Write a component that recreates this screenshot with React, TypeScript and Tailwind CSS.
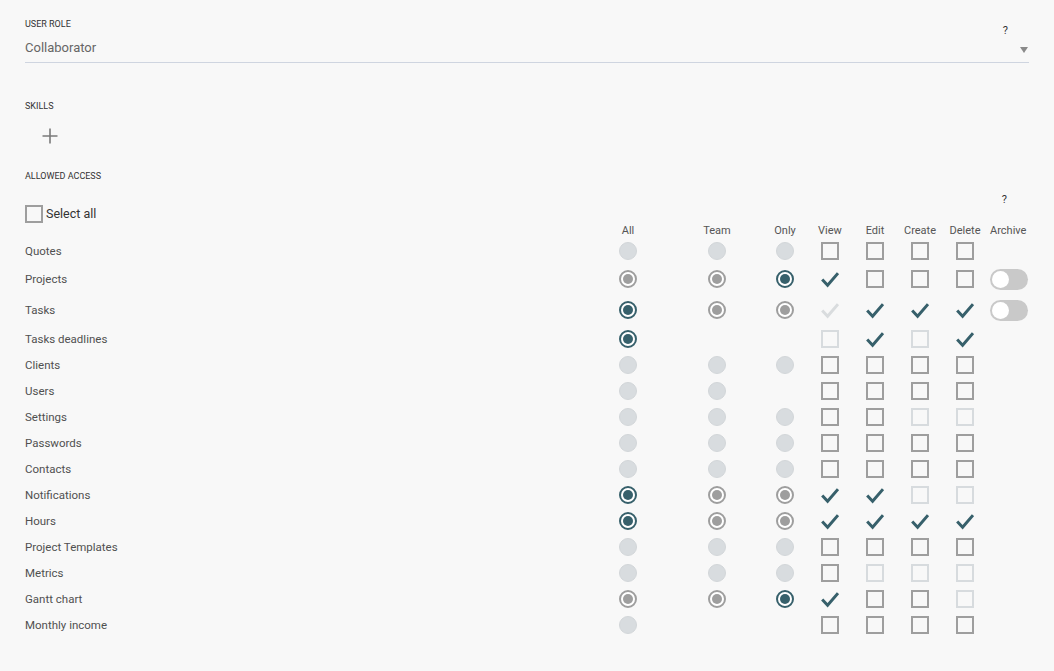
import React from "react";

type R = "d" | "g" | "c" | null;
type C = "u" | "ud" | "c" | "cd" | null;

const rows: { label: string; r: R[]; c: C[]; t?: boolean; h: string }[] = [
  { label: "Quotes", r: ["d", "d", "d"], c: ["u", "u", "u", "u"], h: "h-[26px]" },
  { label: "Projects", r: ["g", "g", "c"], c: ["c", "u", "u", "u"], t: true, h: "h-[30px]" },
  { label: "Tasks", r: ["c", "g", "g"], c: ["cd", "c", "c", "c"], t: true, h: "h-[32px]" },
  { label: "Tasks deadlines", r: ["c", null, null], c: ["ud", "c", "ud", "c"], h: "h-[26px]" },
  { label: "Clients", r: ["d", "d", "d"], c: ["u", "u", "u", "u"], h: "h-[26px]" },
  { label: "Users", r: ["d", "d", null], c: ["u", "u", "u", "u"], h: "h-[26px]" },
  { label: "Settings", r: ["d", "d", "d"], c: ["u", "u", "ud", "ud"], h: "h-[26px]" },
  { label: "Passwords", r: ["d", "d", "d"], c: ["u", "u", "u", "u"], h: "h-[26px]" },
  { label: "Contacts", r: ["d", "d", "d"], c: ["u", "u", "u", "u"], h: "h-[26px]" },
  { label: "Notifications", r: ["c", "g", "g"], c: ["c", "c", "ud", "ud"], h: "h-[26px]" },
  { label: "Hours", r: ["c", "g", "g"], c: ["c", "c", "c", "c"], h: "h-[26px]" },
  { label: "Project Templates", r: ["d", "d", "d"], c: ["u", "u", "u", "u"], h: "h-[26px]" },
  { label: "Metrics", r: ["d", "d", "d"], c: ["u", "ud", "ud", "ud"], h: "h-[26px]" },
  { label: "Gantt chart", r: ["g", "g", "c"], c: ["c", "u", "u", "ud"], h: "h-[26px]" },
  { label: "Monthly income", r: ["d", null, null], c: ["u", "u", "u", "u"], h: "h-[26px]" },
];

function Radio({ s }: { s: R }) {
  if (!s) return null;
  if (s === "d") return <div className="w-[18px] h-[18px] rounded-full bg-[#d8dcdf] border border-[#d2d6d9]" />;
  if (s === "g")
    return (
      <div className="w-[18px] h-[18px] rounded-full border-2 border-[#9e9e9e] bg-white flex items-center justify-center">
        <div className="w-[10px] h-[10px] rounded-full bg-[#9e9e9e]" />
      </div>
    );
  return (
    <div className="w-[18px] h-[18px] rounded-full border-2 border-[#37606b] bg-white flex items-center justify-center">
      <div className="w-[10px] h-[10px] rounded-full bg-[#37606b]" />
    </div>
  );
}

function Check({ color }: { color: string }) {
  return (
    <svg width="18" height="18" viewBox="0 0 18 18">
      <path d="M1.2 9.5 L6.6 15.2 L17 3.2" fill="none" stroke={color} strokeWidth="3" />
    </svg>
  );
}

function Box({ s }: { s: C }) {
  if (!s) return null;
  if (s === "u") return <div className="w-[18px] h-[18px] border-2 border-[#9e9e9e]" />;
  if (s === "ud") return <div className="w-[18px] h-[18px] border-2 border-[#d7dbde]" />;
  if (s === "c") return <Check color="#37606b" />;
  return <Check color="#d9dcde" />;
}

function Toggle() {
  return (
    <div className="ml-[2px] w-[38px] h-[21px] rounded-full bg-[#c9c9c9] flex items-center pl-[2px]">
      <div className="w-[17px] h-[17px] rounded-full bg-white" />
    </div>
  );
}

const grid = "grid grid-cols-[559.5px_87px_91px_45px_45px_45px_45px_45px_41.5px]";

export default function App() {
  return (
    <div className="min-h-[671px] bg-[#f8f8f8] font-['Roboto',sans-serif] px-[25px] pt-[18px] text-[#505050]">
      <div className="relative">
        <div className="text-[9px] leading-[12px] text-[#333] uppercase">User role</div>
        <div className="absolute right-[21px] top-[6px] text-[11px] leading-[14px] text-[#333]">?</div>
        <div className="mt-[8px] pb-[4px] border-b border-[#cfd5e0] flex items-center justify-between">
          <span className="text-[13px] leading-[20px] text-[#666]">Collaborator</span>
          <svg width="8" height="6" viewBox="0 0 8 6" className="mr-[1px] mt-[3px]">
            <polygon points="0,0 8,0 4,6" fill="#8a8a8a" />
          </svg>
        </div>
      </div>

      <div className="mt-[37px] text-[9px] leading-[12px] text-[#333] uppercase">Skills</div>
      <div className="mt-[16px] ml-[17px] w-[16px] h-[16px]">
        <svg width="16" height="16" viewBox="0 0 16 16">
          <path d="M8 0.5 V15.5 M0.5 8 H15.5" stroke="#7a7a7a" strokeWidth="1.6" />
        </svg>
      </div>

      <div className="mt-[26px] text-[9px] leading-[12px] text-[#333] uppercase">Allowed access</div>

      <div className="relative mt-[23px] h-[18px] flex items-center">
        <div className="w-[18px] h-[18px] border-2 border-[#9e9e9e]" />
        <span className="ml-[3px] text-[12.5px] leading-[18px] text-[#333]">Select all</span>
        <div className="absolute right-[22px] top-[-12px] text-[11px] leading-[14px] text-[#333]">?</div>
      </div>

      <div className={`${grid} h-[15px] items-start text-[11px] leading-[15px] text-[#555]`}>
        <div />
        <div className="text-center">All</div>
        <div className="text-center">Team</div>
        <div className="text-center">Only</div>
        <div className="text-center">View</div>
        <div className="text-center">Edit</div>
        <div className="text-center">Create</div>
        <div className="text-center">Delete</div>
        <div className="text-center">Archive</div>
      </div>

      {rows.map((row) => (
        <div key={row.label} className={`${grid} ${row.h} items-center`}>
          <div className="text-[11.5px] leading-[16px] text-[#505050]">{row.label}</div>
          {row.r.map((s, i) => (
            <div key={"r" + i} className="flex justify-center">
              <Radio s={s} />
            </div>
          ))}
          {row.c.map((s, i) => (
            <div key={"c" + i} className="flex justify-center">
              <Box s={s} />
            </div>
          ))}
          <div className="flex justify-center">{row.t ? <Toggle /> : null}</div>
        </div>
      ))}
    </div>
  );
}
